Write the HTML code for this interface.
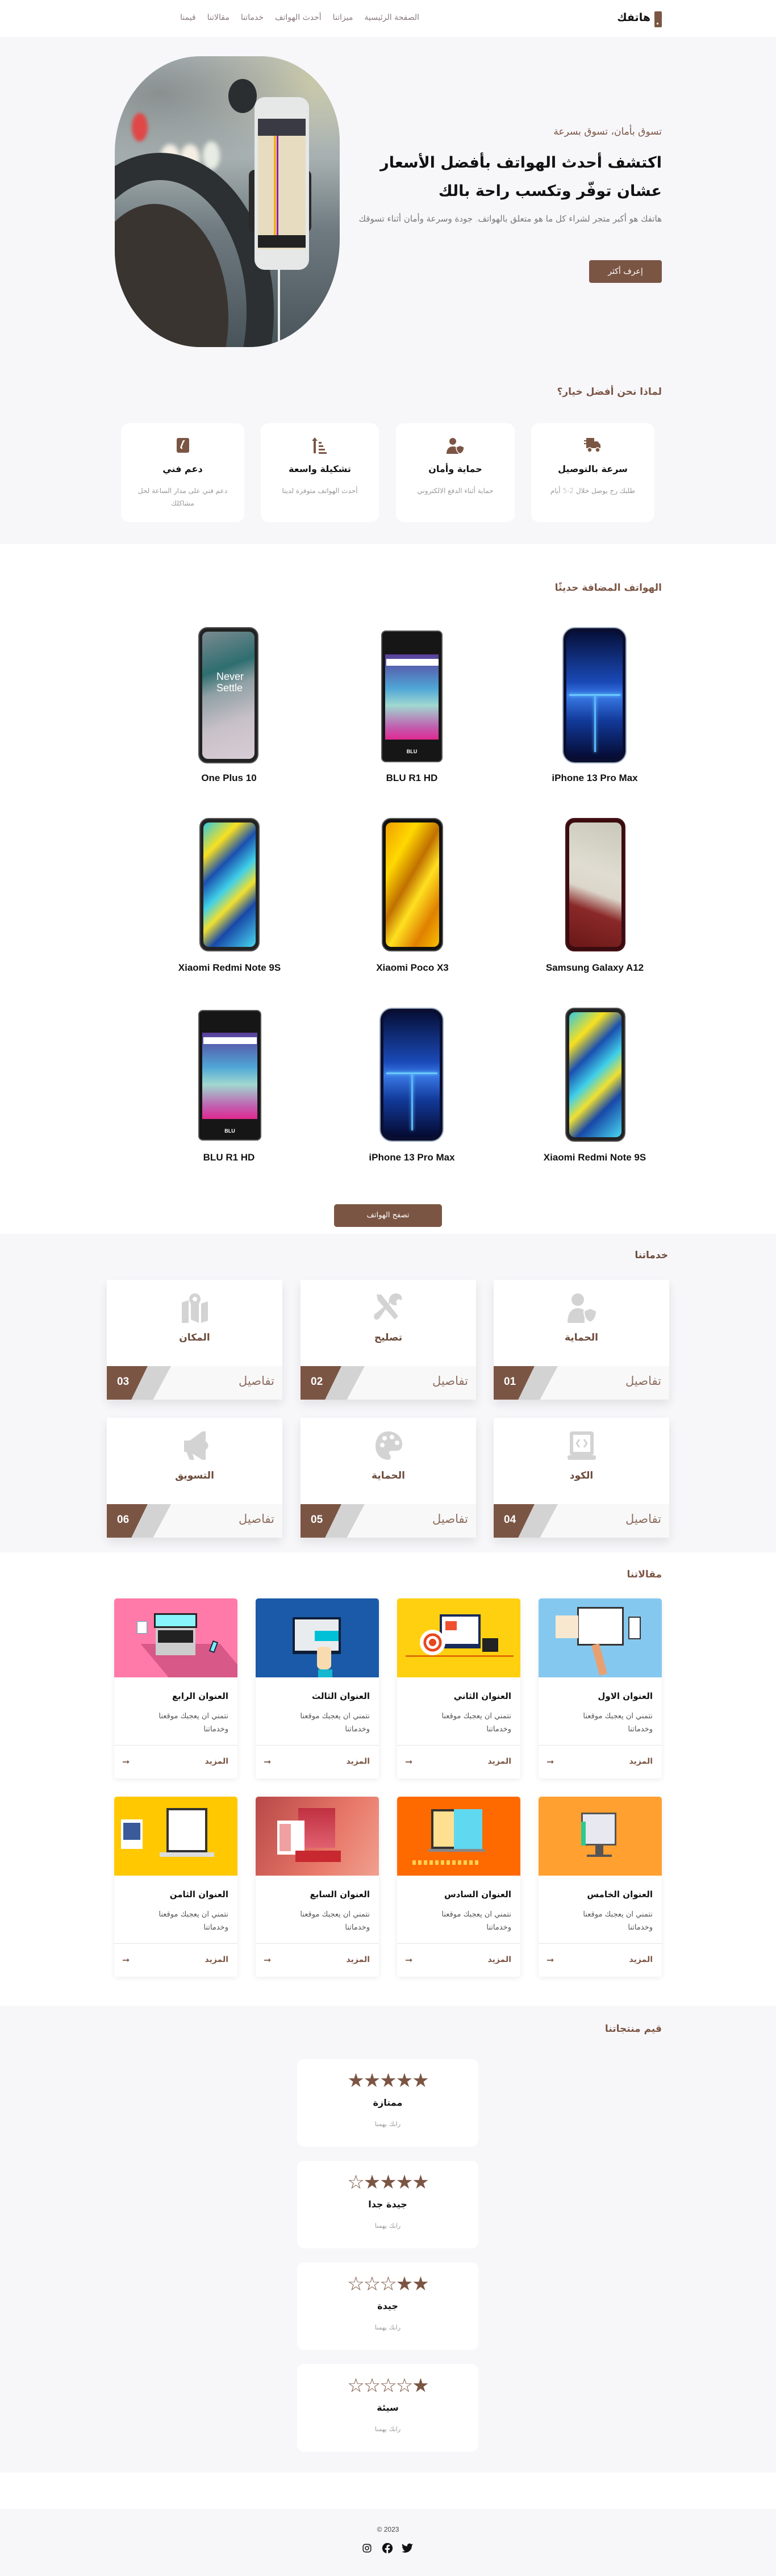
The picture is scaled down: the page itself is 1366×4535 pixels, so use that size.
<!DOCTYPE html>
<html lang="ar" dir="rtl">
<head>
<meta charset="utf-8">
<style>
*{box-sizing:border-box;margin:0;padding:0}
body{width:1366px;height:4535px;position:relative;background:#fff;font-family:"DejaVu Sans","Liberation Sans",sans-serif;direction:rtl;overflow:hidden}
.abs{position:absolute}
.gray{background:#f7f7fa}
.brown{color:#7b5544}
.h2{position:absolute;right:201px;font-size:17px;font-weight:bold;color:#7b5544}
.card{position:absolute;background:#fff;border-radius:14px}
.ph{position:absolute;border-radius:16px;background:#222;border:2px solid #555;overflow:hidden}
.ph .s{position:absolute;left:5px;right:5px;top:6px;bottom:6px;border-radius:10px}
.pn{position:absolute;width:300px;text-align:center;font-family:"Liberation Sans",sans-serif;font-weight:bold;font-size:17px;color:#111;direction:ltr}
.sv{position:absolute;width:309px;height:211px;background:#fff;box-shadow:0 8px 16px rgba(0,0,0,.09)}
.sv .t{position:absolute;top:92px;width:100%;text-align:center;font-weight:bold;font-size:17px;color:#6b4a3a}
.sv .ic{position:absolute;top:22px;left:50%;margin-left:-27px;width:54px;height:54px}
.sv .f{position:absolute;bottom:0;left:0;right:0;height:59px;background:#f8f8f8;overflow:hidden}
.sv .f .b{position:absolute;left:0;top:0;width:72px;height:59px;background:#7b5544;clip-path:polygon(0 0,100% 0,60% 100%,0 100%)}
.sv .f .g{position:absolute;left:43px;top:0;width:70px;height:59px;background:#d3d3d3;clip-path:polygon(42% 0,100% 0,55% 100%,0 100%)}
.sv .f .n{position:absolute;left:18px;top:17px;color:#fff;font-family:"Liberation Sans",sans-serif;font-weight:bold;font-size:19px;direction:ltr}
.sv .f .d{position:absolute;right:14px;top:14px;color:#7b5544;font-size:21px;font-weight:200;opacity:.85}
.ar{position:absolute;width:217px;height:317px;background:#fff;border-radius:5px;box-shadow:0 2px 10px rgba(0,0,0,.08);overflow:hidden}
.ar .im{height:139px;position:relative;overflow:hidden}
.ar .tt{position:absolute;right:16px;top:163px;font-weight:bold;font-size:15px;color:#111}
.ar .ds{position:absolute;right:16px;top:196px;width:150px;font-size:13px;line-height:23px;color:#555}
.ar .ln{position:absolute;left:0;right:0;top:258px;border-top:1px solid #e5e5e5}
.ar .m{position:absolute;right:16px;top:279px;font-size:14px;color:#7b5544;font-weight:bold}
.ar .a{position:absolute;left:14px;top:278px;font-size:16px;color:#7b5544}
.rc{position:absolute;left:523px;width:319px;height:154px;background:#fff;border-radius:12px;text-align:center}
.rc .st{position:absolute;top:18px;width:100%;text-align:center;direction:ltr;font-size:34px;color:#7b5544;letter-spacing:-2px;font-family:"DejaVu Sans",sans-serif}
.rc .rt{position:absolute;top:67px;width:100%;font-weight:bold;font-size:16px;color:#111}
.rc .rs{position:absolute;top:108px;width:100%;font-size:11px;color:#999}
</style>
</head>
<body>
<!-- NAV -->
<div class="abs" style="top:0;left:0;width:1366px;height:65px;background:#fff"></div>
<div class="abs" style="left:1152px;top:20px;width:13px;height:28px;background:#7b5544;border-radius:2px"></div>
<div class="abs" style="left:1156px;top:40px;width:3px;height:3px;background:#fff"></div>
<div class="abs" style="right:221px;top:20px;font-weight:bold;font-size:19px;color:#111">هاتفك</div>
<div class="abs" style="right:628px;top:23px;font-size:14px;color:#8a7a80;font-weight:200;display:flex;gap:20px;white-space:nowrap">
<span>الصفحة الرئيسية</span><span>ميزاتنا</span><span>أحدث الهواتف</span><span>خدماتنا</span><span>مقالاتنا</span><span>قيمنا</span>
</div>

<!-- HERO + WHY -->
<div class="abs gray" style="top:65px;left:0;width:1366px;height:893px"></div>
<div class="abs" style="left:202px;top:99px;width:396px;height:512px;border-radius:150px 140px 160px 150px/170px 150px 190px 170px;overflow:hidden;background:linear-gradient(180deg,#b8c0c2 0%,#a7b0b0 35%,#6e7a80 60%,#48545a 100%)">
  <div class="abs" style="left:0;top:0;width:396px;height:220px;background:radial-gradient(ellipse at 20% 30%,#8a9090 0,transparent 60%),radial-gradient(ellipse at 90% 20%,#c8c8a8 0,transparent 50%)"></div>
  <div class="abs" style="left:30px;top:100px;width:28px;height:50px;border-radius:50%;background:#e04848;filter:blur(3px)"></div>
  <div class="abs" style="left:80px;top:155px;width:35px;height:50px;border-radius:50%;background:#f4eee4;filter:blur(4px)"></div>
  <div class="abs" style="left:115px;top:155px;width:35px;height:50px;border-radius:50%;background:#f4eee4;filter:blur(4px)"></div>
  <div class="abs" style="left:155px;top:150px;width:30px;height:50px;border-radius:50%;background:#e8ece4;filter:blur(4px)"></div>
  <div class="abs" style="left:200px;top:40px;width:50px;height:60px;border-radius:50%;background:#2a2e30"></div>
  <div class="abs" style="left:-120px;top:170px;width:400px;height:560px;border-radius:50%;border:48px solid #2c3032;"></div>
  <div class="abs" style="left:-60px;top:260px;width:260px;height:400px;border-radius:50%;background:#3a3430"></div>
  <div class="abs" style="left:236px;top:200px;width:110px;height:110px;background:#2a2a2a;border-radius:10px"></div>
  <div class="abs" style="left:246px;top:72px;width:96px;height:304px;background:#e6e8e8;border-radius:18px"></div>
  <div class="abs" style="left:252px;top:110px;width:84px;height:230px;background:#e8dcc0"></div>
  <div class="abs" style="left:252px;top:110px;width:84px;height:30px;background:#3a3a44"></div>
  <div class="abs" style="left:280px;top:140px;width:4px;height:180px;background:#f0b020"></div>
  <div class="abs" style="left:285px;top:140px;width:3px;height:180px;background:#8a20b0"></div>
  <div class="abs" style="left:252px;top:315px;width:84px;height:22px;background:#222"></div>
  <div class="abs" style="left:287px;top:375px;width:4px;height:140px;background:#eee"></div>
</div>
<div class="abs brown" style="right:201px;top:222px;font-size:17px">تسوق بأمان، تسوق بسرعة</div>
<div class="abs" style="right:201px;top:262px;font-size:27px;font-weight:bold;line-height:50px;color:#111;white-space:nowrap">اكتشف أحدث الهواتف بأفضل الأسعار<br>عشان توفّر وتكسب راحة بالك</div>
<div class="abs" style="right:201px;top:373px;width:540px;font-size:15px;line-height:25px;color:#777;font-weight:200">هاتفك هو أكبر متجر لشراء كل ما هو متعلق بالهواتف. جودة وسرعة وأمان أثناء تسوقك</div>
<div class="abs" style="left:1037px;top:458px;width:128px;height:40px;background:#7b5544;border-radius:4px;color:#fff;font-size:14px;text-align:center;line-height:40px">إعرف أكثر</div>

<div class="h2" style="top:680px">لماذا نحن أفضل خيار؟</div>
<div class="card" style="left:935px;top:745px;width:217px;height:174px"></div>
<div class="card" style="left:697px;top:745px;width:209px;height:174px"></div>
<div class="card" style="left:459px;top:745px;width:208px;height:174px"></div>
<div class="card" style="left:213px;top:745px;width:217px;height:174px"></div>
<svg class="abs" style="left:1028px;top:769px" width="32" height="30" viewBox="0 0 32 30"><rect x="4" y="2" width="14" height="18" fill="#7b5544"/><path d="M18 8h6l5 6v6H18z" fill="#7b5544"/><rect x="0" y="6" width="10" height="2" fill="#7b5544"/><rect x="0" y="11" width="10" height="2" fill="#7b5544"/><circle cx="10" cy="23" r="4" fill="#7b5544" stroke="#fff" stroke-width="1.5"/><circle cx="24" cy="23" r="4" fill="#7b5544" stroke="#fff" stroke-width="1.5"/></svg>
<svg class="abs" style="left:785px;top:770px" width="34" height="30" viewBox="0 0 34 30"><circle cx="12" cy="7" r="6" fill="#7b5544"/><path d="M1 29c0-9 5-13 11-13s9 2 10 4v9z" fill="#7b5544"/><path d="M25 14l7 3c0 7-3 10-7 12-4-2-7-5-7-12z" fill="#7b5544" stroke="#fff" stroke-width="1.5"/></svg>
<svg class="abs" style="left:548px;top:770px" width="28" height="30" viewBox="0 0 28 30"><path d="M6 0l5 6H8v22H4V6H1z" fill="#7b5544"/><rect x="13" y="8" width="5" height="3" fill="#7b5544"/><rect x="13" y="14" width="8" height="3" fill="#7b5544"/><rect x="13" y="20" width="11" height="3" fill="#7b5544"/><rect x="13" y="26" width="14" height="3" fill="#7b5544"/></svg>
<svg class="abs" style="left:310px;top:770px" width="24" height="28" viewBox="0 0 24 28"><rect x="1" y="1" width="22" height="26" rx="3" fill="#7b5544"/><path d="M15 6c-2 0-3 1-3 3l-3 7c-1 2 0 3 2 3" stroke="#fff" stroke-width="2.5" fill="none"/></svg>
<div class="abs" style="left:935px;top:816px;width:217px;text-align:center;font-weight:bold;font-size:16px;color:#111">سرعة بالتوصيل</div>
<div class="abs" style="left:967px;top:853px;width:153px;text-align:center;font-size:12px;line-height:22px;color:#999;font-weight:200">طلبك رح يوصل خلال 2-5 أيام</div>
<div class="abs" style="left:697px;top:816px;width:209px;text-align:center;font-weight:bold;font-size:16px;color:#111">حماية وأمان</div>
<div class="abs" style="left:697px;top:853px;width:209px;text-align:center;font-size:12px;line-height:22px;color:#999;font-weight:200">حماية أثناء الدفع الالكتروني</div>
<div class="abs" style="left:459px;top:816px;width:208px;text-align:center;font-weight:bold;font-size:16px;color:#111">تشكيلة واسعة</div>
<div class="abs" style="left:459px;top:853px;width:208px;text-align:center;font-size:12px;line-height:22px;color:#999;font-weight:200">أحدث الهواتف متوفرة لدينا</div>
<div class="abs" style="left:213px;top:816px;width:217px;text-align:center;font-weight:bold;font-size:16px;color:#111">دعم فني</div>
<div class="abs" style="left:240px;top:853px;width:163px;text-align:center;font-size:12px;line-height:22px;color:#999;font-weight:200">دعم فني على مدار الساعة لحل مشاكلك</div>

<!-- PHONES -->
<div class="h2" style="top:1025px">الهواتف المضافة حديثًا</div>
<div class="ph" style="left:349px;top:1104px;width:106px;height:240px"><div class="s" style="background:linear-gradient(160deg,#7a8a90 0%,#2e6e70 30%,#8fa0a4 45%,#c8c0c8 70%,#d8cdd6 100%)"></div><div class="abs" style="left:30px;top:75px;color:#fff;font-family:'Liberation Sans';font-size:18px;line-height:20px;direction:ltr">Never<br>Settle</div></div>
<div class="ph" style="left:671px;top:1110px;width:108px;height:232px;border-radius:8px;background:#161616"><div class="s" style="top:40px;bottom:38px;border-radius:0;background:linear-gradient(180deg,#5a3e9a 0%,#4fa6d6 40%,#a0d8d0 60%,#c060b0 85%,#e02890 100%)"></div><div class="abs" style="left:7px;top:48px;width:92px;height:12px;background:#fff"></div><div class="abs" style="left:0;bottom:12px;width:100%;text-align:center;color:#fff;font-size:9px;font-weight:bold;font-family:'Liberation Sans';direction:ltr">BLU</div></div>
<div class="ph" style="left:990px;top:1104px;width:113px;height:240px;border-radius:22px;background:#0a0e30;border-color:#9ab"><div class="s" style="border-radius:18px;background:linear-gradient(180deg,#06103a 0%,#1a4ab8 40%,#3a7ae8 50%,#123a9a 70%,#050a30 100%)"></div><div class="abs" style="left:10px;top:116px;width:90px;height:3px;background:#6ac8ff;box-shadow:0 0 6px #6cf"></div><div class="abs" style="left:54px;top:118px;width:3px;height:100px;background:#5ab8ff;box-shadow:0 0 6px #6cf"></div></div>
<div class="pn" style="left:253px;top:1360px">One Plus 10</div>
<div class="pn" style="left:575px;top:1360px">BLU R1 HD</div>
<div class="pn" style="left:897px;top:1360px">iPhone 13 Pro Max</div>
<div class="ph" style="left:351px;top:1440px;width:106px;height:235px"><div class="s" style="background:linear-gradient(135deg,#30c8e0 0%,#f8e020 20%,#1a50b0 35%,#40d0e8 50%,#f0e030 62%,#1848a8 75%,#48d8f0 100%)"></div></div>
<div class="ph" style="left:672px;top:1440px;width:108px;height:235px;background:#111"><div class="s" style="background:linear-gradient(120deg,#f0a000 0%,#ffd800 25%,#c07000 45%,#ffe020 60%,#e08000 80%,#f8c000 100%)"></div></div>
<div class="ph" style="left:995px;top:1440px;width:106px;height:235px;background:#3a0c10;border-color:#4a1418"><div class="s" style="background:linear-gradient(200deg,#c8c8b8 0%,#e0dcd2 40%,#dcd6ca 55%,#8a2828 70%,#6a1818 100%)"></div></div>
<div class="pn" style="left:254px;top:1694px">Xiaomi Redmi Note 9S</div>
<div class="pn" style="left:576px;top:1694px">Xiaomi Poco X3</div>
<div class="pn" style="left:897px;top:1694px">Samsung Galaxy A12</div>
<div class="ph" style="left:349px;top:1778px;width:111px;height:230px;border-radius:8px;background:#161616"><div class="s" style="top:38px;bottom:36px;border-radius:0;background:linear-gradient(180deg,#5a3e9a 0%,#4fa6d6 40%,#a0d8d0 60%,#c060b0 85%,#e02890 100%)"></div><div class="abs" style="left:7px;top:46px;width:94px;height:12px;background:#fff"></div><div class="abs" style="left:0;bottom:10px;width:100%;text-align:center;color:#fff;font-size:9px;font-weight:bold;font-family:'Liberation Sans';direction:ltr">BLU</div></div>
<div class="ph" style="left:668px;top:1774px;width:113px;height:236px;border-radius:22px;background:#0a0e30;border-color:#9ab"><div class="s" style="border-radius:18px;background:linear-gradient(180deg,#06103a 0%,#1a4ab8 40%,#3a7ae8 50%,#123a9a 70%,#050a30 100%)"></div><div class="abs" style="left:10px;top:112px;width:90px;height:3px;background:#6ac8ff;box-shadow:0 0 6px #6cf"></div><div class="abs" style="left:54px;top:114px;width:3px;height:100px;background:#5ab8ff;box-shadow:0 0 6px #6cf"></div></div>
<div class="ph" style="left:995px;top:1774px;width:106px;height:236px"><div class="s" style="background:linear-gradient(135deg,#30c8e0 0%,#f8e020 20%,#1a50b0 35%,#40d0e8 50%,#f0e030 62%,#1848a8 75%,#48d8f0 100%)"></div></div>
<div class="pn" style="left:253px;top:2028px">BLU R1 HD</div>
<div class="pn" style="left:575px;top:2028px">iPhone 13 Pro Max</div>
<div class="pn" style="left:897px;top:2028px">Xiaomi Redmi Note 9S</div>
<div class="abs" style="left:588px;top:2120px;width:190px;height:40px;background:#7b5544;border-radius:5px;color:#fff;font-size:13px;text-align:center;line-height:40px">تصفح الهواتف</div>

<!-- SERVICES -->
<div class="abs gray" style="top:2172px;left:0;width:1366px;height:561px"></div>
<div class="h2" style="top:2200px;right:190px;color:#6b4a3a">خدماتنا</div>
<div class="sv" style="left:869px;top:2253px"><svg class="ic" viewBox="0 0 54 54"><circle cx="20" cy="13" r="11" fill="#d3d3d3"/><path d="M2 54c0-18 8-26 18-26 6 0 10 2 12 5v21z" fill="#d3d3d3"/><path d="M42 28l11 5c0 12-5 17-11 20-6-3-11-8-11-20z" fill="#d3d3d3" stroke="#fff" stroke-width="2"/></svg><div class="t">الحماية</div><div class="f"><div class="g"></div><div class="b"></div><div class="n">01</div><div class="d">تفاصيل</div></div></div>
<div class="sv" style="left:529px;top:2253px"><svg class="ic" viewBox="0 0 54 54"><path d="M6 4l8 0 30 38-6 6L8 14z" fill="#d3d3d3"/><path d="M40 2c8 0 12 6 10 12l-6-2-4 4 2 6c-6 2-10 0-12-4L12 44c-2 4-8 6-10 2s0-8 4-10l22-18c-2-8 4-16 12-16z" fill="#d3d3d3"/></svg><div class="t">تصليح</div><div class="f"><div class="g"></div><div class="b"></div><div class="n">02</div><div class="d">تفاصيل</div></div></div>
<div class="sv" style="left:188px;top:2253px"><svg class="ic" viewBox="0 0 54 54"><path d="M4 18l12-4v40L4 54z M20 14l14 6v34l-14-6z M38 20l12-4v34l-12 4z" fill="#d3d3d3"/><circle cx="27" cy="12" r="10" fill="#d3d3d3"/><path d="M18 16l9 22 9-22z" fill="#d3d3d3"/><circle cx="27" cy="12" r="4" fill="#fff"/></svg><div class="t">المكان</div><div class="f"><div class="g"></div><div class="b"></div><div class="n">03</div><div class="d">تفاصيل</div></div></div>
<div class="sv" style="left:869px;top:2496px"><svg class="ic" viewBox="0 0 54 54"><rect x="6" y="2" width="42" height="42" rx="4" fill="#d3d3d3"/><rect x="12" y="8" width="30" height="30" fill="#fff"/><path d="M23 16l-5 7 5 7M31 16l5 7-5 7" stroke="#d3d3d3" stroke-width="3" fill="none"/><rect x="2" y="44" width="50" height="8" rx="3" fill="#d3d3d3"/></svg><div class="t">الكود</div><div class="f"><div class="g"></div><div class="b"></div><div class="n">04</div><div class="d">تفاصيل</div></div></div>
<div class="sv" style="left:529px;top:2496px"><svg class="ic" viewBox="0 0 54 54"><path d="M27 2C12 2 4 14 4 28s10 24 22 24c6 0 6-6 3-9s-1-7 4-7h8c8 0 10-6 10-12C51 12 40 2 27 2z" fill="#d3d3d3"/><circle cx="16" cy="26" r="4" fill="#fff"/><circle cx="20" cy="14" r="4" fill="#fff"/><circle cx="33" cy="12" r="4" fill="#fff"/><circle cx="42" cy="22" r="4" fill="#fff"/></svg><div class="t">الحماية</div><div class="f"><div class="g"></div><div class="b"></div><div class="n">05</div><div class="d">تفاصيل</div></div></div>
<div class="sv" style="left:188px;top:2496px"><svg class="ic" viewBox="0 0 54 54"><path d="M40 2l6 0 0 50-6 0-22-14H8V18h10z" fill="#d3d3d3"/><path d="M12 38h10l4 14h-8z" fill="#d3d3d3"/><path d="M46 20c6 2 6 12 0 14z" fill="#d3d3d3"/></svg><div class="t">التسويق</div><div class="f"><div class="g"></div><div class="b"></div><div class="n">06</div><div class="d">تفاصيل</div></div></div>

<!-- ARTICLES -->
<div class="h2" style="top:2762px">مقالاتنا</div>
<div class="ar" style="left:948px;top:2814px"><div class="im" style="background:#85c8ef"><div class="abs" style="left:68px;top:15px;width:82px;height:68px;background:#fff;border:3px solid #333"></div><div class="abs" style="left:30px;top:30px;width:40px;height:40px;background:#f8e8d0"></div><div class="abs" style="left:158px;top:32px;width:22px;height:40px;background:#fff;border:2px solid #333"></div><div class="abs" style="left:100px;top:80px;width:14px;height:55px;background:#e8a070;transform:rotate(-15deg)"></div></div><div class="tt">العنوان الاول</div><div class="ds">نتمني ان يعجبك موقعنا وخدماتنا</div><div class="ln"></div><div class="m">المزيد</div><div class="a">➞</div></div>
<div class="ar" style="left:699px;top:2814px"><div class="im" style="background:#ffd010"><div class="abs" style="left:75px;top:28px;width:72px;height:60px;background:#1a2a5a;border:4px solid #1a2a5a"></div><div class="abs" style="left:79px;top:32px;width:64px;height:48px;background:#fff"></div><div class="abs" style="left:85px;top:40px;width:20px;height:16px;background:#f05030"></div><div class="abs" style="left:40px;top:55px;width:45px;height:45px;border-radius:50%;background:radial-gradient(circle,#e84820 20%,#fff 21%,#fff 35%,#e84820 36%,#e84820 50%,#fff 51%)"></div><div class="abs" style="left:150px;top:70px;width:28px;height:24px;background:#222"></div><div class="abs" style="left:15px;top:100px;width:190px;height:3px;background:#e07000"></div></div><div class="tt">العنوان الثاني</div><div class="ds">نتمني ان يعجبك موقعنا وخدماتنا</div><div class="ln"></div><div class="m">المزيد</div><div class="a">➞</div></div>
<div class="ar" style="left:450px;top:2814px"><div class="im" style="background:#1a5aa8"><div class="abs" style="left:65px;top:33px;width:85px;height:65px;background:#0e1e3a"></div><div class="abs" style="left:69px;top:37px;width:77px;height:55px;background:#e8ecee"></div><div class="abs" style="left:104px;top:57px;width:42px;height:18px;background:#00c0d8"></div><div class="abs" style="left:108px;top:85px;width:25px;height:40px;background:#f8dcb0;border-radius:8px"></div><div class="abs" style="left:110px;top:125px;width:25px;height:14px;background:#14b8d0"></div></div><div class="tt">العنوان الثالث</div><div class="ds">نتمني ان يعجبك موقعنا وخدماتنا</div><div class="ln"></div><div class="m">المزيد</div><div class="a">➞</div></div>
<div class="ar" style="left:201px;top:2814px"><div class="im" style="background:#ff7aa8"><div class="abs" style="left:80px;top:80px;width:140px;height:80px;background:#d85888;transform:skewX(40deg)"></div><div class="abs" style="left:70px;top:26px;width:76px;height:26px;background:#88f4fc;border:3px solid #222"></div><div class="abs" style="left:73px;top:52px;width:70px;height:48px;background:#ccc"></div><div class="abs" style="left:77px;top:56px;width:62px;height:22px;background:#222"></div><div class="abs" style="left:40px;top:40px;width:18px;height:22px;background:#fff;border:1px solid #5ac"></div><div class="abs" style="left:170px;top:75px;width:10px;height:20px;background:#7ef;border:2px solid #223;transform:rotate(20deg)"></div></div><div class="tt">العنوان الرابع</div><div class="ds">نتمني ان يعجبك موقعنا وخدماتنا</div><div class="ln"></div><div class="m">المزيد</div><div class="a">➞</div></div>

<div class="ar" style="left:948px;top:3163px"><div class="im" style="background:#ffa030"><div class="abs" style="left:75px;top:28px;width:62px;height:58px;background:#e8e8f0;border:3px solid #555"></div><div class="abs" style="left:75px;top:44px;width:8px;height:42px;background:#30c890"></div><div class="abs" style="left:100px;top:86px;width:14px;height:16px;background:#555"></div><div class="abs" style="left:85px;top:102px;width:44px;height:4px;background:#555"></div></div><div class="tt">العنوان الخامس</div><div class="ds">نتمني ان يعجبك موقعنا وخدماتنا</div><div class="ln"></div><div class="m">المزيد</div><div class="a">➞</div></div>
<div class="ar" style="left:699px;top:3163px"><div class="im" style="background:#ff6a00"><div class="abs" style="left:60px;top:22px;width:90px;height:70px;background:#ffe090;border:4px solid #333"></div><div class="abs" style="left:100px;top:22px;width:50px;height:70px;background:#60d8f0"></div><div class="abs" style="left:55px;top:92px;width:100px;height:5px;background:#888"></div><div class="abs" style="left:27px;top:112px;width:120px;height:8px;background:repeating-linear-gradient(90deg,#ffd050 0 6px,transparent 6px 10px)"></div></div><div class="tt">العنوان السادس</div><div class="ds">نتمني ان يعجبك موقعنا وخدماتنا</div><div class="ln"></div><div class="m">المزيد</div><div class="a">➞</div></div>
<div class="ar" style="left:450px;top:3163px"><div class="im" style="background:linear-gradient(120deg,#b84848,#e87868 60%,#f0a090)"><div class="abs" style="left:75px;top:20px;width:65px;height:70px;background:linear-gradient(#c03040,#e06070)"></div><div class="abs" style="left:38px;top:42px;width:48px;height:60px;background:#fff"></div><div class="abs" style="left:42px;top:48px;width:20px;height:48px;background:#f0a0a0"></div><div class="abs" style="left:70px;top:95px;width:80px;height:20px;background:#c82830"></div></div><div class="tt">العنوان السابع</div><div class="ds">نتمني ان يعجبك موقعنا وخدماتنا</div><div class="ln"></div><div class="m">المزيد</div><div class="a">➞</div></div>
<div class="ar" style="left:201px;top:3163px"><div class="im" style="background:#ffc800"><div class="abs" style="left:92px;top:20px;width:72px;height:78px;background:#fff;border:4px solid #333"></div><div class="abs" style="left:80px;top:98px;width:96px;height:8px;background:#ddd"></div><div class="abs" style="left:12px;top:40px;width:38px;height:52px;background:#fff"></div><div class="abs" style="left:16px;top:46px;width:30px;height:30px;background:#3a5a9a"></div></div><div class="tt">العنوان الثامن</div><div class="ds">نتمني ان يعجبك موقعنا وخدماتنا</div><div class="ln"></div><div class="m">المزيد</div><div class="a">➞</div></div>

<!-- RATINGS -->
<div class="abs gray" style="top:3531px;left:0;width:1366px;height:822px"></div>
<div class="h2" style="top:3562px">قيم منتجاتنا</div>
<div class="rc" style="top:3625px"><div class="st">★★★★★</div><div class="rt">ممتازة</div><div class="rs">رابك يهمنا</div></div>
<div class="rc" style="top:3804px"><div class="st">☆★★★★</div><div class="rt">جيدة جدا</div><div class="rs">رابك يهمنا</div></div>
<div class="rc" style="top:3983px"><div class="st">☆☆☆★★</div><div class="rt">جيدة</div><div class="rs">رابك يهمنا</div></div>
<div class="rc" style="top:4162px"><div class="st">☆☆☆☆★</div><div class="rt">سيئة</div><div class="rs">رابك يهمنا</div></div>

<!-- FOOTER -->
<div class="abs gray" style="top:4417px;left:0;width:1366px;height:118px"></div>
<div class="abs" style="left:0;top:4446px;width:1366px;text-align:center;font-size:12px;color:#444;direction:ltr;font-family:'Liberation Sans',sans-serif">© 2023</div>
<svg class="abs" style="left:637px;top:4477px" width="18" height="18" viewBox="0 0 24 24"><rect x="3" y="3" width="18" height="18" rx="5" fill="none" stroke="#111" stroke-width="2"/><circle cx="12" cy="12" r="4" fill="none" stroke="#111" stroke-width="2"/><circle cx="17.3" cy="6.7" r="1.2" fill="#111"/></svg>
<svg class="abs" style="left:672px;top:4476px" width="20" height="20" viewBox="0 0 24 24"><circle cx="12" cy="12" r="11" fill="#111"/><path d="M13.5 24v-8.5h3l.5-3.5h-3.5V9.8c0-1 .4-1.7 1.8-1.7H17V5c-.4 0-1.5-.2-2.7-.2-2.7 0-4.3 1.6-4.3 4.5V12H7v3.5h3V24z" fill="#fff"/></svg>
<svg class="abs" style="left:707px;top:4477px" width="20" height="18" viewBox="0 0 24 20"><path d="M24 2.4c-.9.4-1.8.7-2.8.8 1-.6 1.8-1.6 2.2-2.7-1 .6-2 1-3.1 1.2A4.9 4.9 0 0 0 11.9 6 14 14 0 0 1 1.7.9a4.9 4.9 0 0 0 1.5 6.6c-.8 0-1.6-.3-2.2-.6 0 2.4 1.7 4.4 3.9 4.8-.7.2-1.5.2-2.2.1.6 2 2.4 3.4 4.6 3.4A9.9 9.9 0 0 1 0 17.2 14 14 0 0 0 7.5 19.4c9.1 0 14-7.5 14-14v-.6c1-.7 1.8-1.6 2.5-2.4z" fill="#111"/></svg>
</body>
</html>
